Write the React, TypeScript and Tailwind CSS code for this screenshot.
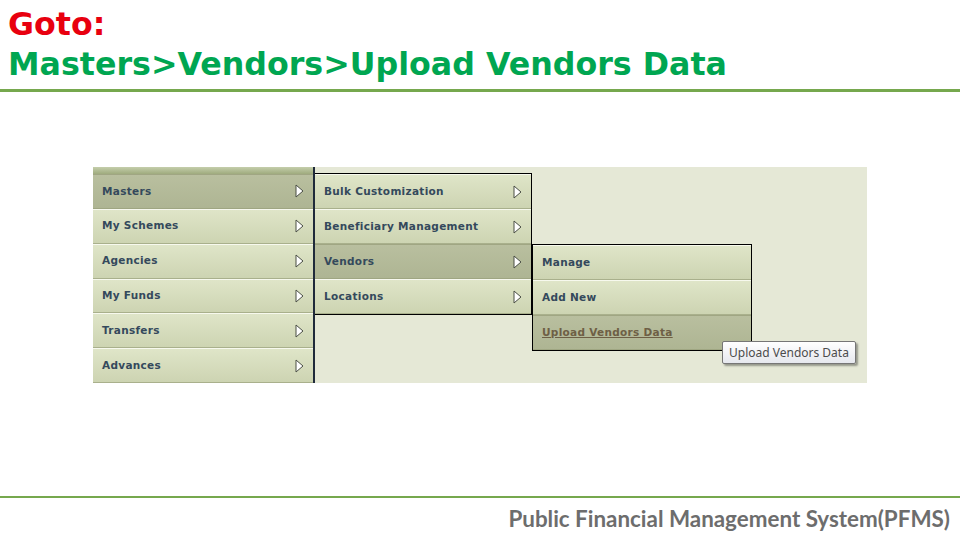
import React from 'react';

const menuFont = { fontFamily: '"DejaVu Sans", Verdana, sans-serif' };

function Arrow() {
  return (
    <svg width="9" height="14" viewBox="0 0 9 14" className="shrink-0">
      <polygon points="1,1 8,7 1,13" fill="#ffffff" stroke="#4a4f45" strokeWidth="1" />
    </svg>
  );
}

function Row({ label, active, arrow = true, link }: { label: string; active?: boolean; arrow?: boolean; link?: boolean }) {
  return (
    <div
      className={
        'flex items-center justify-between pl-[9px] pr-[9px] border-t border-b ' +
        (active
          ? 'bg-gradient-to-b from-[#b9bf9f] to-[#aeb593] border-t-[#a0a683] border-b-[#9fa682]'
          : 'bg-gradient-to-b from-[#dfe5c8] to-[#cdd4b2] border-t-[#f7f9ee] border-b-[#a9b08c]')
      }
      style={{ height: 35 }}
    >
      <span
        className={
          'text-[10.5px] font-bold tracking-[0.3px] ' +
          (link ? 'text-[#6e5f45] underline' : 'text-[#34495c]')
        }
        style={menuFont}
      >
        {label}
      </span>
      {arrow && <Arrow />}
    </div>
  );
}

export default function App() {
  return (
    <div className="w-[960px] h-[540px] bg-white flex flex-col overflow-hidden">
      <div className="pl-[8px] pt-[4px] h-[89px]" style={{ fontFamily: '"DejaVu Sans", Verdana, sans-serif' }}>
        <div className="text-[31.7px] leading-[40px] font-bold text-[#e8000f]">Goto:</div>
        <div className="text-[31.7px] leading-[40px] font-bold text-[#00a651] whitespace-nowrap">Masters&gt;Vendors&gt;Upload Vendors Data</div>
      </div>
      <div className="h-[3px] bg-[#76a84e]" />

      <div className="pt-[75px] pl-[93px]">
        <div className="relative flex w-[774px] h-[216px] bg-[#e5e8d6]">
          {/* main menu */}
          <div className="w-[220px] flex flex-col">
            <div className="h-[7px] bg-gradient-to-b from-[#c5ceab] to-[#9fab7e]" />
            <Row label="Masters" active />
            <Row label="My Schemes" />
            <Row label="Agencies" />
            <Row label="My Funds" />
            <Row label="Transfers" />
            <Row label="Advances" />
          </div>
          <div className="w-[2px] bg-[#1f2a3a]" />

          {/* second level */}
          <div className="w-[217px] pt-[6px]">
            <div className="border-t border-r border-b border-black flex flex-col">
              <Row label="Bulk Customization" />
              <Row label="Beneficiary Management" />
              <Row label="Vendors" active />
              <Row label="Locations" />
            </div>
          </div>

          {/* third level */}
          <div className="w-[220px] pt-[77px]">
            <div className="border border-black flex flex-col">
              <Row label="Manage" arrow={false} />
              <Row label="Add New" arrow={false} />
              <Row label="Upload Vendors Data" arrow={false} active link />
            </div>
          </div>

          {/* tooltip */}
          <div
            className="absolute left-[629px] top-[174px] h-[23px] px-[6px] flex items-center whitespace-nowrap bg-gradient-to-b from-white to-[#e6e8ee] border border-[#767676] rounded-[2px] shadow-[2px_2px_2px_rgba(0,0,0,0.35)] text-[12px] text-[#4c4c4c]"
            style={{ fontFamily: '"Noto Sans", "DejaVu Sans", sans-serif' }}
          >
            Upload Vendors Data
          </div>
        </div>
      </div>

      <div className="mt-auto">
        <div className="h-[2px] bg-[#76a84e]" />
        <div className="h-[42px] flex items-center justify-end pr-[10px]">
          <span className="text-[22.4px] leading-[28px] font-bold text-[#6d6d6d]" style={{ fontFamily: 'Lato, "Open Sans", sans-serif' }}>
            Public Financial Management System(PFMS)
          </span>
        </div>
      </div>
    </div>
  );
}
